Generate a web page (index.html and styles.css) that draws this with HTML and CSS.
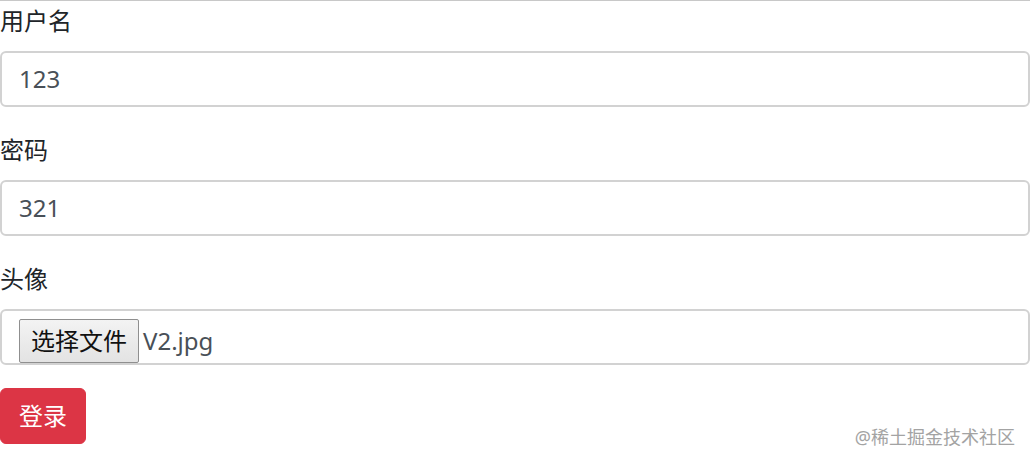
FILE: index.html
```html
<!DOCTYPE html>
<html lang="zh-CN">
<head>
    <meta charset="UTF-8">
    <meta name="viewport" content="width=device-width, initial-scale=1.0">
    <title>登录</title>
    <link rel="stylesheet" href="styles.css">
</head>
<body>
    <form class="login-form">
        <div class="form-group">
            <label class="field-label">用户名</label>
            <div class="form-control">123</div>
        </div>
        <div class="form-group">
            <label class="field-label">密码</label>
            <div class="form-control">321</div>
        </div>
        <div class="form-group last">
            <label class="field-label">头像</label>
            <div class="form-control file-control">
                <span class="file-button">选择文件</span>
                <span class="file-name">V2.jpg</span>
            </div>
        </div>
        <button type="button" class="btn-danger">登录</button>
    </form>
    <div class="watermark">@稀土掘金技术社区</div>
</body>
</html>
```

FILE: styles.css
```css
body {
    margin: 0;
    font-family: "Noto Sans", "Noto Sans CJK SC", sans-serif;
    font-size: 24px;
    line-height: 36px;
    color: #212529;
    background-color: #ffffff;
}
.login-form {
    border-top: 1px solid #c8c8c8;
    padding-top: 2px;
}
.form-group {
    margin-bottom: 25px;
}
.form-group.last {
    margin-bottom: 23px;
}
.field-label {
    display: block;
    margin-bottom: 12px;
}
.form-control {
    box-sizing: border-box;
    height: 56px;
    padding: 8px 17px;
    border: 2px solid #d2d2d2;
    border-radius: 6px;
    color: #495057;
    line-height: 36px;
}
.file-control {
    display: flex;
    align-items: flex-start;
    overflow: hidden;
}
.file-button {
    box-sizing: border-box;
    height: 44px;
    padding: 0 11px;
    line-height: 42px;
    color: #111111;
    background: linear-gradient(#f3f3f3, #e3e3e3);
    border: 1px solid #8f8f8f;
    border-radius: 2px;
}
.file-name {
    margin-left: 4px;
    line-height: 44px;
}
.btn-danger {
    font-family: inherit;
    font-size: 24px;
    line-height: 36px;
    padding: 9px 18px;
    color: #ffffff;
    background-color: #dc3545;
    border: 1.5px solid #dc3545;
    border-radius: 6px;
    cursor: pointer;
}
.watermark {
    position: absolute;
    right: 15px;
    bottom: 12px;
    font-size: 18px;
    line-height: 24px;
    color: #a3a3a3;
}
```
